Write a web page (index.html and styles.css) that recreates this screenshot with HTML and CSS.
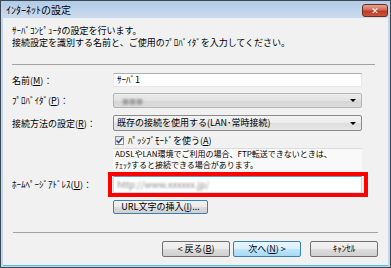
FILE: index.html
```html
<!DOCTYPE html>
<html lang="ja">

<head>
    <meta charset="UTF-8">
    <meta name="viewport" content="width=device-width, initial-scale=1.0">
    <title>インターネットの設定</title>
    <link rel="stylesheet" href="styles.css">
</head>

<body>
    <div class="window">
        <div class="title_bar">
            <span class="title">ｲﾝﾀｰﾈｯﾄの設定</span>
            <span class="close_btn">&#x2715;</span>
        </div>
        <div class="dlg_body">
            <div class="intro">
                <p>ｻｰﾊﾞｺﾝﾋﾟｭｰﾀの設定を行います。</p>
                <p>接続設定を識別する名前と、ご使用のﾌﾟﾛﾊﾞｲﾀﾞを入力してください。</p>
            </div>
            <div class="sep top_sep"></div>

            <div class="row row_name">
                <label class="all_label">名前(<u>M</u>)：</label>
                <div class="text_box">ｻｰﾊﾞ1</div>
            </div>
            <div class="row row_prov">
                <label class="all_label">ﾌﾟﾛﾊﾞｲﾀﾞ(<u>P</u>)：</label>
                <div class="combo combo_off">
                    <span class="blur short">■■■</span>
                    <span class="arrow"></span>
                </div>
            </div>
            <div class="row row_conn">
                <label class="all_label">接続方法の設定(<u>R</u>)：</label>
                <div class="combo">
                    <span>既存の接続を使用する(LAN･常時接続)</span>
                    <span class="arrow"></span>
                </div>
            </div>
            <div class="row row_check">
                <span></span>
                <div class="check_line">
                    <span class="check_box">
                        <svg width="7" height="7" viewBox="0 0 7 7">
                            <path d="M0.5 3.5 L2.6 5.6 L6.5 1" fill="none" stroke="#2a4a8c" stroke-width="1.5" />
                        </svg>
                    </span>
                    <span>ﾊﾟｯｼﾌﾞﾓｰﾄﾞを使う(<u>A</u>)</span>
                </div>
            </div>
            <div class="row row_info">
                <span></span>
                <div class="info_box">
                    <p>ADSLやLAN環境でご利用の場合、FTP転送できないときは、</p>
                    <p>ﾁｪｯｸすると接続できる場合があります。</p>
                </div>
            </div>
            <div class="row row_url">
                <label class="all_label">ﾎｰﾑﾍﾟｰｼﾞｱﾄﾞﾚｽ(<u>U</u>)：</label>
                <div class="red_frame">
                    <div class="text_box url_box"><span class="blur">http://www.xxxxxx.jp/</span></div>
                </div>
            </div>
            <div class="row row_insert">
                <span></span>
                <div><button class="btn btn_focus insert_btn">URL文字の挿入(<u>I</u>)...</button></div>
            </div>

            <div class="sep bottom_sep"></div>
            <div class="footer">
                <button class="btn">&lt; 戻る(<u>B</u>)</button>
                <button class="btn btn_default">次へ(<u>N</u>) &gt;</button>
                <button class="btn btn_cancel">ｷｬﾝｾﾙ</button>
            </div>
        </div>
    </div>
</body>

</html>
```

FILE: styles.css
```css
body {
    margin: 0;
    padding: 0;
    background-color: #ffffff;
    font-family: "Noto Sans CJK JP", "DejaVu Sans", sans-serif;
    font-size: 9px;
    color: #000000;
}

p {
    margin: 0;
}

.window {
    width: 391px;
    height: 268px;
    box-sizing: border-box;
    border: 1px solid #3b4753;
    display: flex;
    flex-direction: column;
    background-color: #c4d6ea;
}

.title_bar {
    height: 17px;
    display: flex;
    align-items: center;
    justify-content: space-between;
    padding: 0 2px 0 5px;
    background-image: linear-gradient(180deg, #b3cbe6 0%, #cadbee 100%);
}

.title {
    font-size: 10px;
    line-height: 12px;
}

.close_btn {
    width: 24px;
    height: 11px;
    margin-top: 2px;
    border: 1px solid #6e2b1e;
    border-radius: 3px;
    background-image: linear-gradient(180deg, #e7a595 0%, #d06a55 45%, #bb3b24 55%, #c9563b 100%);
    color: #ffffff;
    font-size: 9px;
    font-weight: bold;
    line-height: 11px;
    text-align: center;
}

.dlg_body {
    flex: 1;
    margin: 0 2px 1px;
    padding: 0 9px;
    background-color: #f1f1f1;
    border-bottom: 1px solid #56bde6;
    display: flex;
    flex-direction: column;
}

.intro {
    padding-top: 7px;
    line-height: 11.5px;
}

.sep {
    height: 1px;
    background-color: #a3a3a3;
}

.top_sep {
    margin-top: 16px;
    margin-right: 4px;
}

.row {
    display: grid;
    grid-template-columns: 101px 249px;
    align-items: center;
}

.row_name {
    margin-top: 8px;
}

.row_prov {
    margin-top: 6px;
}

.row_conn {
    margin-top: 7px;
}

.row_check {
    margin-top: 4px;
}

.row_info {
    margin-top: 2px;
}

.row_url {
    margin-top: 2px;
}

.row_insert {
    margin-top: 3px;
}

.all_label {
    line-height: 11px;
}

.text_box {
    height: 14px;
    box-sizing: border-box;
    border: 1px solid #e3e9ef;
    border-top-color: #abadb3;
    background-color: #ffffff;
    padding-left: 3px;
    line-height: 12px;
}

.combo {
    height: 16px;
    box-sizing: border-box;
    border: 1px solid #8a8a8a;
    border-radius: 2px;
    background-image: linear-gradient(180deg, #f4f4f4 0%, #ebebeb 50%, #dedede 51%, #e6e6e6 100%);
    display: flex;
    align-items: center;
    justify-content: space-between;
    padding: 0 5px 0 3px;
    line-height: 12px;
}

.combo_off {
    height: 15px;
    border-color: #b5b5b5;
    background-image: linear-gradient(180deg, #ececec 0%, #e2e2e2 50%, #d6d6d6 51%, #dcdcdc 100%);
}

.arrow {
    width: 0;
    height: 0;
    border-left: 3px solid transparent;
    border-right: 3px solid transparent;
    border-top: 3px solid #000000;
}

.blur {
    color: #8a8a8a;
    filter: blur(1px);
}

.short {
    padding-left: 5px;
    font-size: 7px;
    color: #a0a0a0;
}

.check_line {
    display: flex;
    align-items: center;
    gap: 4px;
    padding-left: 2px;
    line-height: 11px;
}

.check_box {
    width: 9px;
    height: 9px;
    box-sizing: border-box;
    border: 1px solid #8e8f8f;
    background-image: linear-gradient(135deg, #dcdcdc 0%, #ffffff 100%);
    display: flex;
    align-items: center;
    justify-content: center;
}

.info_box {
    height: 22px;
    box-sizing: border-box;
    border-top: 1px solid #dcdcdc;
    background-color: #f9f9f9;
    padding: 0 2px;
    font-size: 8px;
    line-height: 10.5px;
}

.red_frame {
    margin-left: -5px;
    margin-right: -6px;
    border: 4px solid #ff0000;
    padding: 0 2px 0 1px;
}

.url_box {
    height: 17px;
    line-height: 15px;
    border-color: #c5dbec;
    border-top-color: #5a9ccc;
}

.btn {
    height: 16px;
    box-sizing: border-box;
    padding: 0;
    border: 1px solid #707070;
    border-radius: 2px;
    background-image: linear-gradient(180deg, #f2f2f2 0%, #ebebeb 48%, #dddddd 52%, #cfcfcf 100%);
    font-family: inherit;
    font-size: 9px;
    line-height: 12px;
    color: #000000;
}

.btn_focus {
    border-color: #3c7fb1;
}

.insert_btn {
    width: 95px;
    height: 14px;
}

.bottom_sep {
    margin-top: 18px;
    margin-left: 1px;
    margin-right: 1px;
}

.footer {
    margin-top: 8px;
    margin-right: 1px;
    display: flex;
    justify-content: flex-end;
}

.footer .btn {
    width: 68px;
    margin-left: 3px;
}

.btn_default {
    border-color: #3c7fb1;
    background-image: linear-gradient(180deg, #eaf6fd 0%, #d9f0fc 48%, #bee6fd 52%, #a7d9f5 100%);
}

.footer .btn_cancel {
    margin-left: 9px;
}
```
